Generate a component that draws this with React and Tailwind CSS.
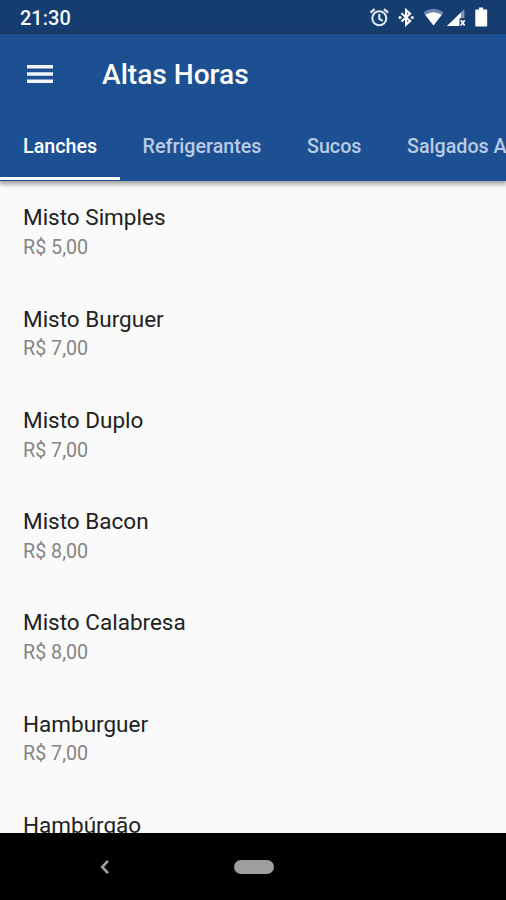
const TABS = [
  { label: 'Lanches', place: 'pl-[23px] w-[120px]', active: true },
  { label: 'Refrigerantes', place: 'pl-[22.500px] w-[164px]' },
  { label: 'Sucos', place: 'pl-[23px] w-[100px]' },
  { label: 'Salgados A', place: 'pl-[23px] w-[122px]' },
];

const ITEMS = [
  ['Misto Simples', 'R$ 5,00'],
  ['Misto Burguer', 'R$ 7,00'],
  ['Misto Duplo', 'R$ 7,00'],
  ['Misto Bacon', 'R$ 8,00'],
  ['Misto Calabresa', 'R$ 8,00'],
  ['Hamburguer', 'R$ 7,00'],
  ['Hambúrgão', null],
];

function StatusIcons() {
  return (
    <svg width="126" height="24" viewBox="368 6 126 24" className="block">
      <g fill="none" stroke="#dfe7f3" strokeWidth="2.100">
        <circle cx="379.3" cy="18.3" r="7" />
        <path d="M379.3 14v4.8l3.4 2.1M370.4 12.6l4.2-3.5M388.2 12.6L384 9.1" />
        <path d="M401.500 13.300l8.600 7.700-4 3.600V10.200l4 3.600-8.600 7.700" stroke="#fff" strokeWidth="2.100" />
      </g>
      <circle cx="400" cy="17.4" r="1.5" fill="#fff" />
      <circle cx="412.3" cy="17.4" r="1.5" fill="#fff" />
      <path d="M423.3 12.3Q433.5 5 443.7 12.3L433.5 25.6z" fill="#6c86ae" />
      <path d="M425.2 14.800Q433.5 9.500 441.8 14.800L433.5 25.6z" fill="#fff" />
      <path d="M447 26L464.4 9v9H460v8z" fill="#7f95b8" />
      <path d="M447 26L461 12.6v5.6h-2V26z" fill="#fff" />
      <path d="M460.7 20.3l4 5.2m0-5.2l-4 5.2" stroke="#fff" strokeWidth="1.7" />
      <path d="M479 7.6h4.2v2h3c.6 0 1 .4 1 1v14.8c0 .6-.4 1-1 1h-9.9c-.6 0-1-.4-1-1V10.600c0-.6.4-1 1-1H479z" fill="#fff" />
    </svg>
  );
}

export default function App() {
  return (
    <div className="flex h-[900px] w-[506px] flex-col overflow-hidden bg-[#fafafa] font-['Roboto',sans-serif]">
      <div className="flex h-[34px] shrink-0 items-start justify-between bg-[#163d6f] pl-5 pr-3">
        <span className="pt-[4px] text-[20px] font-medium leading-[28px] text-[#f4f7fc]">21:30</span>
        <div className="pt-1.5"><StatusIcons /></div>
      </div>
      <header className="relative h-[146.500px] shrink-0 bg-[#1d5092] shadow-[0_2px_5px_1px_rgba(0,0,0,0.38)]">
        <div className="flex h-[79px] items-center pl-[27px]">
          <svg width="26" height="20" viewBox="0 0 26 20" fill="#f2f6fc" className="shrink-0">
            <path d="M0 1h26v3.600H0zM0 8.200h26v3.600H0zM0 15.400h26v3.600H0z" />
          </svg>
          <h1 className="ml-[49px] whitespace-nowrap pt-[2px] text-[28.100px] font-medium leading-[34px] text-white">Altas Horas</h1>
        </div>
        <nav className="flex h-[67px] overflow-hidden">
          {TABS.map((t) => (
            <div
              key={t.label}
              className={`${t.place} shrink-0 whitespace-nowrap border-b-[3px] pt-[21px] text-[19.7px] font-medium leading-[26px] ${
                t.active ? 'border-white text-white' : 'border-transparent text-[#b9cbe5]'
              }`}
            >
              {t.label}
            </div>
          ))}
        </nav>
      </header>
      <main className="h-[652.500px] shrink-0 overflow-hidden pl-[23px]">
        {ITEMS.map(([name, price]) => (
          <div key={name} className="h-[101.250px] whitespace-nowrap pt-[22.900px]">
            <div className="text-[22.500px] leading-[28px] text-[#212121]">{name}</div>
            {price && <div className="pt-[3.800px] text-[19.700px] leading-[26px] text-[#858585]">{price}</div>}
          </div>
        ))}
      </main>
      <footer className="flex flex-1 items-center bg-black">
        <svg width="10" height="16" viewBox="0 0 10 16" fill="none" stroke="#a0a0a0" strokeWidth="2.600" className="ml-[100px]">
          <path d="M8 1.900L2.200 8l5.800 6.100" />
        </svg>
        <div className="ml-[123.500px] h-[14px] w-[40px] rounded-full bg-[#9e9e9e]" />
      </footer>
    </div>
  );
}
